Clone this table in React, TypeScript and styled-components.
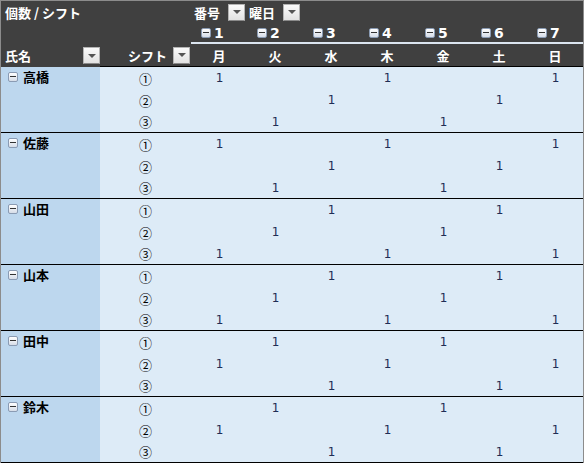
import React from "react"
import styled, { createGlobalStyle } from "styled-components"

const days = ["月", "火", "水", "木", "金", "土", "日"]
const shifts = ["①", "②", "③"]

// 1 が入る曜日の位置 (シフト①②③ごと)
const patterns: Record<string, number[][]> = {
    A: [[0, 3, 6], [2, 5], [1, 4]],
    B: [[2, 5], [1, 4], [0, 3, 6]],
    C: [[1, 4], [0, 3, 6], [2, 5]],
}

const people = [
    { name: "高橋", pattern: "A" },
    { name: "佐藤", pattern: "A" },
    { name: "山田", pattern: "B" },
    { name: "山本", pattern: "B" },
    { name: "田中", pattern: "C" },
    { name: "鈴木", pattern: "C" },
]

function App() {
    return (
        <>
            <GlobalStyle />
            <Frame>
                <Header>
                    <TitleCell>個数 / シフト</TitleCell>
                    <FilterArea>
                        <FilterLabel>番号</FilterLabel>
                        <DropButton />
                        <FilterLabel>曜日</FilterLabel>
                        <DropButton />
                    </FilterArea>
                    <BlankCell />
                    {days.map((_, i) => (
                        <NumberCell key={i}>
                            <Toggle />
                            {i + 1}
                        </NumberCell>
                    ))}
                    <FieldHeader>
                        氏名
                        <DropButton />
                    </FieldHeader>
                    <ShiftHeader>
                        シフト
                        <DropButton />
                    </ShiftHeader>
                    {days.map((d) => (
                        <DayHeader key={d}>{d}</DayHeader>
                    ))}
                </Header>
                {people.map((p) => (
                    <Group key={p.name}>
                        <NameCell>
                            <NameLine>
                                <Toggle $wide />
                                {p.name}
                            </NameLine>
                        </NameCell>
                        {shifts.map((s, r) => (
                            <React.Fragment key={s}>
                                <ShiftCell>{s}</ShiftCell>
                                {days.map((_, c) => (
                                    <ValueCell key={c}>
                                        {patterns[p.pattern][r].includes(c) ? 1 : ""}
                                    </ValueCell>
                                ))}
                            </React.Fragment>
                        ))}
                    </Group>
                ))}
            </Frame>
        </>
    )
}

const GlobalStyle = createGlobalStyle`
    body {
        margin: 0;
        background: #ffffff;
        font-family: "Noto Sans CJK JP", "Noto Sans", sans-serif;
    }
`

const columns = `99px 91px repeat(7, 56px)`

const Frame = styled.div`
    width: 584px;
    height: 463px;
    box-sizing: border-box;
    border-top: 1px solid #8c8c8c;
    border-left: 1px solid #8c8c8c;
    border-right: 1px solid #8c8c8c;
    overflow: hidden;
    background: #ddebf7;
`

// ヘッダー部分

const Header = styled.div`
    display: grid;
    grid-template-columns: ${columns};
    grid-template-rows: 22px 21px 23px;
    background: #404040;
    color: #ffffff;
    font-size: 13px;
    font-weight: 700;
`

const TitleCell = styled.div`
    grid-column: 1 / 3;
    display: flex;
    align-items: center;
    padding-left: 4px;
`

const FilterArea = styled.div`
    grid-column: 3 / 10;
    display: flex;
    align-items: center;
    padding-left: 3px;
`

const FilterLabel = styled.span`
    margin-right: 8px;
    & + button {
        margin-right: 4px;
    }
`

const BlankCell = styled.div`
    grid-column: 1 / 3;
`

const NumberCell = styled.div`
    display: flex;
    align-items: center;
    padding-left: 10px;
    border-bottom: 2px solid #dce6f1;
    font-family: "DejaVu Sans", sans-serif;
    font-size: 14px;
`

const FieldHeader = styled.div`
    display: flex;
    align-items: center;
    justify-content: space-between;
    padding-left: 4px;
`

const ShiftHeader = styled.div`
    display: flex;
    align-items: center;
    justify-content: space-between;
    padding-left: 28px;
    padding-right: 1px;
    border-bottom: 1px solid #000000;
`

const DayHeader = styled.div`
    display: flex;
    align-items: center;
    justify-content: center;
    border-bottom: 1px solid #000000;
`

const DropButton = styled.button`
    width: 17px;
    height: 17px;
    padding: 0;
    border: 1px solid #b4b4b4;
    border-bottom-color: #8a8a8a;
    background: linear-gradient(#fbfbfb, #e2e2e2);
    display: flex;
    align-items: center;
    justify-content: center;
    &::after {
        content: "";
        border-left: 4px solid transparent;
        border-right: 4px solid transparent;
        border-top: 4px solid #555555;
    }
`

const Toggle = styled.span<{ $wide?: boolean }>`
    position: relative;
    display: inline-block;
    width: 10px;
    height: 10px;
    box-sizing: border-box;
    margin-right: ${(p) => (p.$wide ? "5px" : "3px")};
    border: 1px solid #8a9bb3;
    border-radius: 2px;
    background: linear-gradient(#ffffff, #d6dde8);
    flex-shrink: 0;
    &::after {
        content: "";
        position: absolute;
        left: 1px;
        right: 1px;
        top: 3.5px;
        height: 1px;
        background: #333333;
    }
`

// 明細部分

const Group = styled.div`
    display: grid;
    grid-template-columns: ${columns};
    grid-template-rows: 22px 22px 21px;
    border-bottom: 1px solid #000000;
`

const NameCell = styled.div`
    grid-row: 1 / 4;
    padding-left: 7px;
    background: #bdd7ee;
`

const NameLine = styled.div`
    display: flex;
    align-items: center;
    height: 19px;
    font-size: 13px;
    font-weight: 700;
    color: #000000;
`

const ShiftCell = styled.div`
    display: flex;
    align-items: center;
    justify-content: center;
    font-size: 13px;
    color: #000000;
`

const ValueCell = styled.div`
    display: flex;
    align-items: center;
    justify-content: center;
    padding-left: 1px;
    font-family: "DejaVu Sans", sans-serif;
    font-size: 12px;
    color: #1f2d55;
`

export default App
